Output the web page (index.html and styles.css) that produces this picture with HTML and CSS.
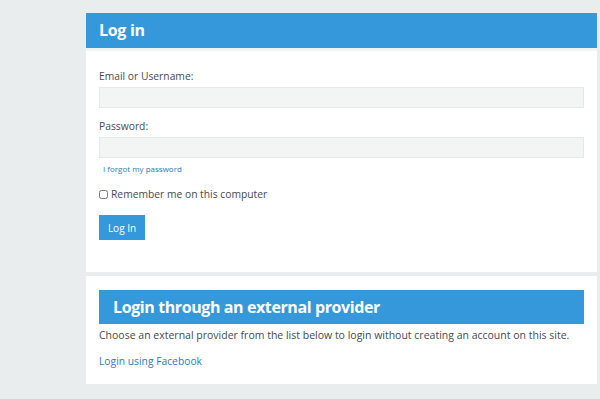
FILE: index.html
```html
<!DOCTYPE html>
<html lang="en">
<head>
  <meta charset="UTF-8">
  <meta name="viewport" content="width=device-width, initial-scale=1.0">
  <title>Log in</title>
  <link rel="stylesheet" href="styles.css">
</head>
<body>
  <div class="main">
    <div class="panel">
      <h2 class="panel-title">Log in</h2>
      <div class="panel-body">
        <form class="login-form" action="#" method="POST">
          <div class="form-group">
            <label for="user">Email or Username:</label>
            <input type="text" id="user" name="user">
          </div>
          <div class="form-group">
            <label for="pass">Password:</label>
            <input type="password" id="pass" name="pass">
            <a href="#" class="forgot">I forgot my password</a>
          </div>
          <div class="remember">
            <input type="checkbox" id="remember" name="remember">
            <label for="remember">Remember me on this computer</label>
          </div>
          <button type="submit">Log In</button>
        </form>
      </div>
    </div>

    <div class="panel panel-external">
      <h2 class="external-title">Login through an external provider</h2>
      <p class="intro">Choose an external provider from the list below to login without creating an account on this site.</p>
      <a href="#" class="provider">Login using Facebook</a>
    </div>
  </div>
</body>
</html>
```

FILE: styles.css
```css
body {
  margin: 0;
  background-color: #e9edee;
  font-family: "Open Sans", Arial, sans-serif;
  font-size: 10.3px;
  color: #464b51;
}
.main {
  margin: 13px 3px 0 86px;
}
.panel {
  background-color: #fff;
  margin-bottom: 4px;
}
.panel-title {
  margin: 0;
  height: 35px;
  line-height: 35px;
  padding-left: 13px;
  background-color: #3498db;
  color: #fff;
  font-size: 16px;
  letter-spacing: -0.3px;
  font-weight: bold;
  border-bottom: 3px solid #f2f4f4;
}
.panel-body {
  padding: 18px 13px 32px;
}
.form-group {
  margin-bottom: 11px;
}
.form-group label {
  display: block;
  margin-bottom: 3px;
  line-height: 15px;
}
.form-group input {
  display: block;
  box-sizing: border-box;
  width: 100%;
  height: 21px;
  border: 1px solid #e6e8e8;
  background-color: #f3f4f4;
}
.forgot {
  display: block;
  margin: 5px 0 0 4px;
  font-size: 8px;
  line-height: 11px;
  color: #2e7cb8;
  text-decoration: none;
}
.remember {
  display: flex;
  align-items: center;
  margin: 13px 0 13px;
}
.remember input {
  width: 9px;
  height: 9px;
  margin: 0 3px 0 0;
}
.remember label {
  line-height: 15px;
}
button {
  display: block;
  width: 46px;
  height: 25px;
  padding: 0;
  border: none;
  background-color: #3498db;
  color: #fff;
  font-family: inherit;
  font-size: 10px;
}
.panel-external {
  padding: 14px 13px 15px;
}
.external-title {
  margin: 0;
  height: 34px;
  line-height: 34px;
  padding-left: 14px;
  background-color: #3498db;
  color: #fff;
  font-size: 16px;
  letter-spacing: -0.4px;
  font-weight: bold;
}
.intro {
  margin: 4px 0 11px;
  font-size: 10.5px;
  line-height: 15px;
}
.provider {
  display: block;
  line-height: 15px;
  color: #2e7cb8;
  text-decoration: none;
}
```
